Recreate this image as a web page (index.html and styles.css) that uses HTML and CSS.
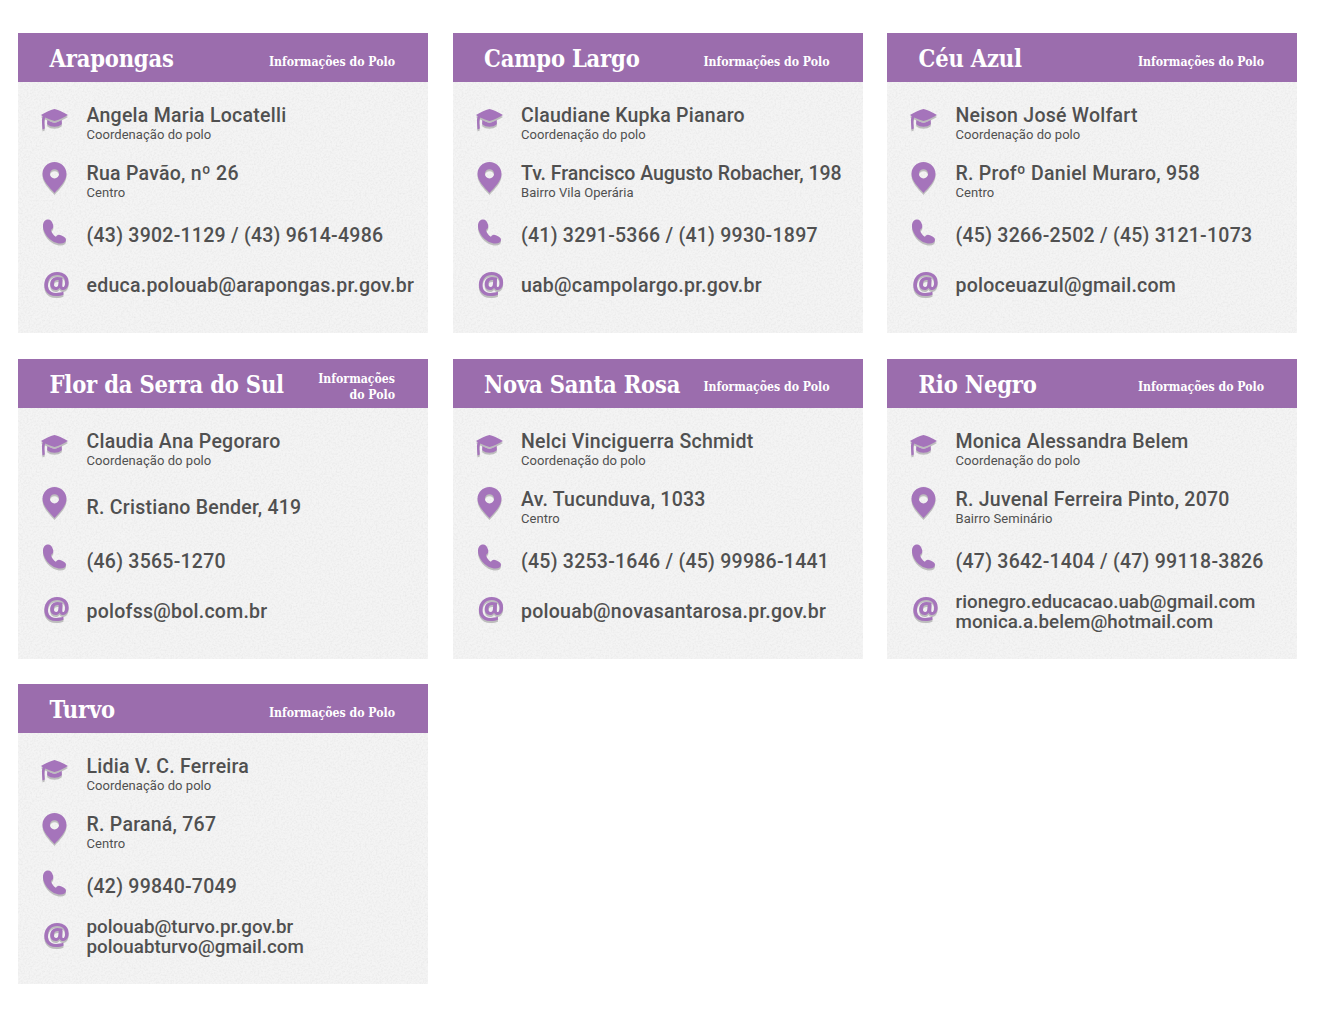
FILE: index.html
```html
<!DOCTYPE html>
<html lang="pt-BR">
<head>
<meta charset="utf-8">
<title>Polos</title>
<link rel="stylesheet" href="styles.css">
</head>
<body>
<svg class="defs" width="0" height="0" aria-hidden="true">
  <symbol id="i-cap" viewBox="0 0 27 22"><path d="M13.500 1C18 2.300 23 4.400 27 7 23 9.600 18 11.700 13.500 13 10.500 12.200 7.400 11 4.300 9.500 3.500 11 3.300 13 3.500 15.500L3.800 20.500 1.500 21.500 1 14C.9 11.600 1.100 9.800 1.800 8.200L0 7C4 4.400 9 2.300 13.500 1zM6.200 12C8.700 13.300 11 14.300 13.500 15 16 14.300 18.300 13.300 20.800 12V16.200C18.900 17.900 16.400 18.700 13.500 18.700S8.100 17.900 6.200 16.200z"/></symbol>
  <symbol id="i-pin" viewBox="0 0 24 31"><path fill-rule="evenodd" d="M12 0C5.300 0 0 5.200 0 11.800 0 19 7 25.500 12 31c5-5.500 12-12 12-19.200C24 5.200 18.700 0 12 0zm0 7.200a4.600 4.600 0 1 1 0 9.200 4.600 4.600 0 0 1 0-9.200z"/></symbol>
  <symbol id="i-tel" viewBox="0 0 24 25"><path d="M5.500 .5C2.500 .5.500 3 .500 7c0 8 8.500 17.500 17.500 17.500 3.500 0 5.500-1.500 5.500-3.700 0-1.800-1.500-3-4.500-4.300-2-.9-3.500-.9-4.500 0l-1.200 1.200C11 16.500 9 13.500 8.500 11L10 9.500c1-1 1-2.500.5-4C9.500 2 8 .5 5.500 .5z"/></symbol>
</svg>
<main class="grid">

<article class="card">
  <header class="head"><h2 class="title">Arapongas</h2><span class="info">Informações do Polo</span></header>
  <div class="body">
    <div class="row"><svg class="ico cap"><use href="#i-cap"/></svg><div class="txt"><p class="main">Angela Maria Locatelli</p><p class="sub">Coordenação do polo</p></div></div>
    <div class="row"><svg class="ico pin"><use href="#i-pin"/></svg><div class="txt"><p class="main">Rua Pavão, nº 26</p><p class="sub">Centro</p></div></div>
    <div class="row"><svg class="ico tel"><use href="#i-tel"/></svg><div class="txt"><p class="main">(43) 3902-1129 / (43) 9614-4986</p></div></div>
    <div class="row"><span class="ico at">@</span><div class="txt"><p class="main">educa.polouab@arapongas.pr.gov.br</p></div></div>
  </div>
</article>

<article class="card">
  <header class="head"><h2 class="title">Campo Largo</h2><span class="info">Informações do Polo</span></header>
  <div class="body">
    <div class="row"><svg class="ico cap"><use href="#i-cap"/></svg><div class="txt"><p class="main">Claudiane Kupka Pianaro</p><p class="sub">Coordenação do polo</p></div></div>
    <div class="row"><svg class="ico pin"><use href="#i-pin"/></svg><div class="txt"><p class="main tight">Tv. Francisco Augusto Robacher, 198</p><p class="sub">Bairro Vila Operária</p></div></div>
    <div class="row"><svg class="ico tel"><use href="#i-tel"/></svg><div class="txt"><p class="main">(41) 3291-5366 / (41) 9930-1897</p></div></div>
    <div class="row"><span class="ico at">@</span><div class="txt"><p class="main">uab@campolargo.pr.gov.br</p></div></div>
  </div>
</article>

<article class="card">
  <header class="head"><h2 class="title">Céu Azul</h2><span class="info">Informações do Polo</span></header>
  <div class="body">
    <div class="row"><svg class="ico cap"><use href="#i-cap"/></svg><div class="txt"><p class="main">Neison José Wolfart</p><p class="sub">Coordenação do polo</p></div></div>
    <div class="row"><svg class="ico pin"><use href="#i-pin"/></svg><div class="txt"><p class="main">R. Profº Daniel Muraro, 958</p><p class="sub">Centro</p></div></div>
    <div class="row"><svg class="ico tel"><use href="#i-tel"/></svg><div class="txt"><p class="main">(45) 3266-2502 / (45) 3121-1073</p></div></div>
    <div class="row"><span class="ico at">@</span><div class="txt"><p class="main">poloceuazul@gmail.com</p></div></div>
  </div>
</article>

<article class="card">
  <header class="head"><h2 class="title">Flor da Serra do Sul</h2><span class="info">Informações do Polo</span></header>
  <div class="body">
    <div class="row"><svg class="ico cap"><use href="#i-cap"/></svg><div class="txt"><p class="main">Claudia Ana Pegoraro</p><p class="sub">Coordenação do polo</p></div></div>
    <div class="row"><svg class="ico pin"><use href="#i-pin"/></svg><div class="txt"><p class="main">R. Cristiano Bender, 419</p></div></div>
    <div class="row"><svg class="ico tel"><use href="#i-tel"/></svg><div class="txt"><p class="main">(46) 3565-1270</p></div></div>
    <div class="row"><span class="ico at">@</span><div class="txt"><p class="main">polofss@bol.com.br</p></div></div>
  </div>
</article>

<article class="card">
  <header class="head"><h2 class="title">Nova Santa Rosa</h2><span class="info">Informações do Polo</span></header>
  <div class="body">
    <div class="row"><svg class="ico cap"><use href="#i-cap"/></svg><div class="txt"><p class="main">Nelci Vinciguerra Schmidt</p><p class="sub">Coordenação do polo</p></div></div>
    <div class="row"><svg class="ico pin"><use href="#i-pin"/></svg><div class="txt"><p class="main">Av. Tucunduva, 1033</p><p class="sub">Centro</p></div></div>
    <div class="row"><svg class="ico tel"><use href="#i-tel"/></svg><div class="txt"><p class="main">(45) 3253-1646 / (45) 99986-1441</p></div></div>
    <div class="row"><span class="ico at">@</span><div class="txt"><p class="main">polouab@novasantarosa.pr.gov.br</p></div></div>
  </div>
</article>

<article class="card">
  <header class="head"><h2 class="title">Rio Negro</h2><span class="info">Informações do Polo</span></header>
  <div class="body">
    <div class="row"><svg class="ico cap"><use href="#i-cap"/></svg><div class="txt"><p class="main">Monica Alessandra Belem</p><p class="sub">Coordenação do polo</p></div></div>
    <div class="row"><svg class="ico pin"><use href="#i-pin"/></svg><div class="txt"><p class="main">R. Juvenal Ferreira Pinto, 2070</p><p class="sub">Bairro Seminário</p></div></div>
    <div class="row"><svg class="ico tel"><use href="#i-tel"/></svg><div class="txt"><p class="main">(47) 3642-1404 / (47) 99118-3826</p></div></div>
    <div class="row"><span class="ico at">@</span><div class="txt"><p class="main double">rionegro.educacao.uab@gmail.com<br>monica.a.belem@hotmail.com</p></div></div>
  </div>
</article>

<article class="card">
  <header class="head"><h2 class="title">Turvo</h2><span class="info">Informações do Polo</span></header>
  <div class="body">
    <div class="row"><svg class="ico cap"><use href="#i-cap"/></svg><div class="txt"><p class="main">Lidia V. C. Ferreira</p><p class="sub">Coordenação do polo</p></div></div>
    <div class="row"><svg class="ico pin"><use href="#i-pin"/></svg><div class="txt"><p class="main">R. Paraná, 767</p><p class="sub">Centro</p></div></div>
    <div class="row"><svg class="ico tel"><use href="#i-tel"/></svg><div class="txt"><p class="main">(42) 99840-7049</p></div></div>
    <div class="row"><span class="ico at">@</span><div class="txt"><p class="main double">polouab@turvo.pr.gov.br<br>polouabturvo@gmail.com</p></div></div>
  </div>
</article>

</main>
</body>
</html>
```
FILE: styles.css
```css
* { box-sizing: border-box; }
html, body { margin: 0; background: #fff; }
.defs { position: absolute; }
.grid {
  display: grid;
  grid-template-columns: repeat(3, 410px);
  column-gap: 24.5px;
  row-gap: 25.5px;
  padding: 33px 0 33px 18px;
}
.card {
  height: 300px;
  background-color: #f4f4f4;
  background-image: url("data:image/svg+xml;utf8,<svg xmlns='http://www.w3.org/2000/svg' width='300' height='300'><filter id='n'><feTurbulence type='fractalNoise' baseFrequency='.55' numOctaves='3' stitchTiles='stitch'/><feColorMatrix values='0 0 0 0 .55 0 0 0 0 .55 0 0 0 0 .55 .4 0 0 0 -.15'/></filter><rect width='300' height='300' filter='url(%23n)'/></svg>");
  font-family: "Roboto", sans-serif;
  color: #505050;
}
.head {
  height: 49px;
  background: #9b6dad;
  color: #fff;
  display: flex;
  align-items: center;
  justify-content: space-between;
  gap: 20px;
  padding: 2px 33px 0 31.5px;
}
.title {
  margin: 3px 0 0;
  flex: none;
  font: 700 23.5px/1 "DejaVu Serif Condensed", "DejaVu Serif", serif;
  font-stretch: condensed;
  letter-spacing: -.2px;
  white-space: nowrap;
}
.info {
  margin-top: 6px;
  font: 700 12.2px/16px "DejaVu Serif", serif;
  font-stretch: condensed;
  text-align: right;
}
.body {
  display: grid;
  grid-template-rows: 38px 78px 30px 70px;
  padding: 22px 0 0 23px;
}
.row {
  display: flex;
  align-items: center;
  gap: 18.5px;
}
.ico {
  flex: none;
  width: 27px;
  fill: #a574bb;
  color: #a574bb;
  filter: drop-shadow(0 2px 0 #bdbdbd);
}
.cap { height: 22px; margin-bottom: 8px; }
.pin { height: 31px; margin-bottom: 8px; }
.tel { height: 25px; margin-bottom: 8px; }
.at {
  height: 27px;
  margin-bottom: 6px;
  padding-left: 2px;
  font: 800 30px/27px "Noto Sans", sans-serif;
  text-align: center;
}
.txt { min-width: 0; padding-top: 2px; }
.main {
  margin: 0;
  font-size: 19.5px;
  line-height: 20px;
  font-weight: 500;
  letter-spacing: .25px;
  white-space: nowrap;
}
.tight { letter-spacing: -.03px; }
.double { font-size: 18.8px; letter-spacing: .03px; }
.sub {
  margin: 1px 0 -1px;
  font-size: 13px;
  line-height: 16px;
  letter-spacing: .05px;
}
```
